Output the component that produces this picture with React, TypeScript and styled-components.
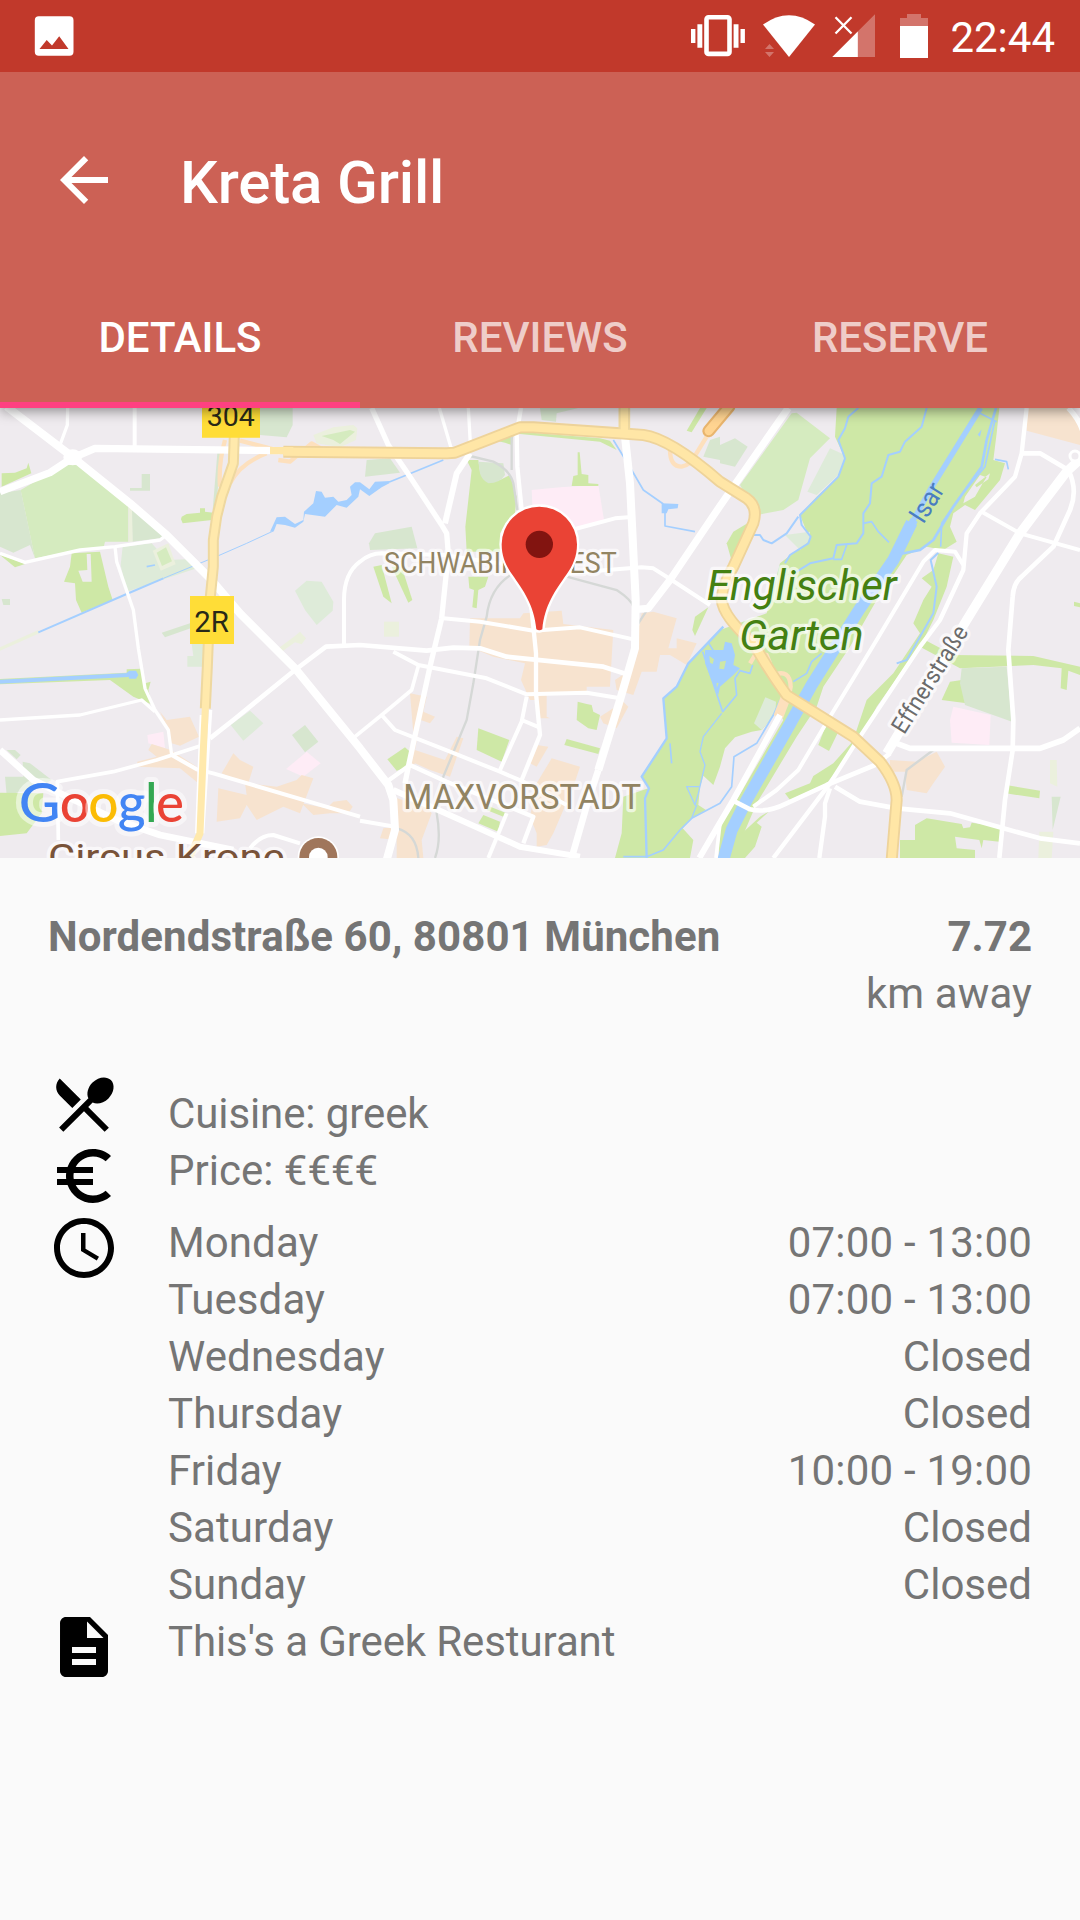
import React from "react";
import styled, { createGlobalStyle } from "styled-components";

const GlobalStyle = createGlobalStyle`
  * { box-sizing: border-box; }
  html, body { margin: 0; padding: 0; background: #fafafa; }
  body { font-family: Roboto, "Noto Sans", sans-serif; }
`;

const Screen = styled.div`
  width: 1080px;
  height: 1920px;
  display: flex;
  flex-direction: column;
  overflow: hidden;
  background: #fafafa;
`;

const StatusBar = styled.header`
  position: relative;
  z-index: 2;
  height: 72px;
  flex: none;
  display: flex;
  align-items: center;
  justify-content: space-between;
  padding: 0 25px 0 34px;
  background: #c1392b;
  color: #fff;
`;

const StatusGroup = styled.div`
  display: flex;
  align-items: center;
  height: 72px;
`;

const Clock = styled.time`
  margin-left: 20px;
  font-size: 42px;
  line-height: 72px;
  padding-top: 3px;
`;

const AppBar = styled.div`
  position: relative;
  z-index: 1;
  flex: none;
  height: 336px;
  padding-top: 24px;
  display: flex;
  flex-direction: column;
  background: #cc6155;
  box-shadow: 0 3px 12px rgba(0, 0, 0, 0.42);
  color: #fff;
`;

const Toolbar = styled.div`
  height: 168px;
  display: flex;
  align-items: center;
  gap: 60px;
  padding: 0 48px;
`;

const BackButton = styled.button`
  width: 72px;
  height: 72px;
  padding: 0;
  border: 0;
  background: none;
  color: inherit;
`;

const Title = styled.h1`
  margin: 0;
  padding-top: 5px;
  font-size: 60px;
  line-height: 72px;
  font-weight: 500;
  letter-spacing: -0.15px;
`;

const Tabs = styled.nav`
  display: grid;
  grid-template-columns: repeat(3, 1fr);
  height: 144px;
`;

const Tab = styled.button<{ $active?: boolean }>`
  padding: 8px 0 0;
  border: 0;
  border-bottom: 6px solid ${(p) => (p.$active ? "#ff4081" : "transparent")};
  background: none;
  font: 500 42px Roboto, sans-serif;
  color: ${(p) => (p.$active ? "#fff" : "rgba(255, 255, 255, 0.7)")};
`;

const MapView = styled.section`
  flex: none;
  height: 450px;
  overflow: hidden;
  background: #efebef;

  svg { display: block; }
`;

const Details = styled.main`
  padding: 48px 48px 0;
  display: flex;
  flex-direction: column;
  font-size: 42px;
  line-height: 57px;
  color: #757575;
`;

const AddressRow = styled.div`
  display: flex;
  justify-content: space-between;
  margin-bottom: 48px;
`;

const Distance = styled.div`
  display: flex;
  flex-direction: column;
  align-items: flex-end;
`;

const Line = styled.span<{ $bold?: boolean; $tracking?: number }>`
  height: 57px;
  padding-top: 2px;
  white-space: nowrap;
  font-weight: ${(p) => (p.$bold ? 700 : 400)};
  letter-spacing: ${(p) => p.$tracking ?? 0}px;
`;

const InfoRow = styled.div<{ $align?: string }>`
  display: grid;
  grid-template-columns: 72px 1fr;
  column-gap: 48px;
  align-items: ${(p) => p.$align ?? "start"};
`;

const HoursList = styled.div`
  display: flex;
  flex-direction: column;
`;

const HoursRow = styled.div`
  display: flex;
  justify-content: space-between;
`;

const Icon = styled.svg.attrs({ viewBox: "0 0 24 24" })`
  display: block;
  width: 72px;
  height: 72px;
  fill: currentColor;
`;

const RowIcon = styled(Icon)`
  color: #000;
`;

const icons = {
  back: "M20 11H7.83l5.59-5.59L12 4l-8 8 8 8 1.41-1.41L7.83 13H20v-2z",
  dining:
    "M8.1 13.34l2.83-2.83L3.91 3.5c-1.56 1.56-1.56 4.09 0 5.66l4.19 4.18zm6.78-1.81c1.53.71 3.68.21 5.27-1.38 1.91-1.91 2.28-4.65.81-6.12-1.46-1.46-4.2-1.1-6.12.81-1.59 1.59-2.09 3.74-1.38 5.27L3.7 19.87l1.41 1.41L12 14.41l6.88 6.88 1.41-1.41L13.41 13l1.47-1.47z",
  euro:
    "M15 18.5c-2.51 0-4.68-1.42-5.76-3.5H15v-2H8.58c-.05-.33-.08-.66-.08-1s.03-.67.08-1H15V9H9.24C10.32 6.92 12.5 5.5 15 5.5c1.61 0 3.09.59 4.23 1.57L21 5.3C19.41 3.87 17.3 3 15 3c-3.92 0-7.24 2.51-8.48 6H3v2h3.06c-.04.33-.06.66-.06 1s.02.67.06 1H3v2h3.52c1.24 3.49 4.56 6 8.48 6 2.31 0 4.41-.87 6-2.3l-1.78-1.77c-1.13.98-2.6 1.57-4.22 1.57z",
  clock:
    "M11.99 2C6.47 2 2 6.48 2 12s4.47 10 9.99 10C17.52 22 22 17.52 22 12S17.52 2 11.99 2zM12 20c-4.42 0-8-3.58-8-8s3.58-8 8-8 8 3.58 8 8-3.58 8-8 8zm.5-13H11v6l5.25 3.15.75-1.23-4.5-2.67z",
  description:
    "M14 2H6c-1.1 0-1.99.9-1.99 2L4 20c0 1.1.89 2 1.99 2H18c1.1 0 2-.9 2-2V8l-6-6zm2 16H8v-2h8v2zm0-4H8v-2h8v2zm-3-5V3.5L18.5 9H13z",
};

const hours: [string, string][] = [
  ["Monday", "07:00 - 13:00"],
  ["Tuesday", "07:00 - 13:00"],
  ["Wednesday", "Closed"],
  ["Thursday", "Closed"],
  ["Friday", "10:00 - 19:00"],
  ["Saturday", "Closed"],
  ["Sunday", "Closed"],
];

/* ---- Map data: three map units per screen pixel ---- */

const GREEN = "#cee8a6";
const MEADOW = "#d5ebbf";
const SAGE = "#d7e6cf";
const PALE = "#deebd9";
const CREAM = "#ebf0dd";
const PEACH = "#f7e3cf";
const PINK = "#feecf6";
const LAND = "#efebef";
const WATER = "#a4cfff";

const areas: [string, string][] = [
  [SAGE, "M0 280L62 270L105 475L90 435L40 458L0 440Z"],
  [MEADOW, "M190 195H245L385 315V425H315L310 445L235 450L105 475L62 270Z"],
  [SAGE, "M395 322L490 405L480 415L397 425Z"],
  [CREAM, "M386 316L396 322L398 425H386Z"],
  [GREEN, "M5 220L45 218L80 205L85 188L94 220L5 260Z"],
  [GREEN, "M0 465L40 478L75 492L45 502Z"],
  [SAGE, "M425 222H450V272H390V264H425Z"],
  [GREEN, "M545 350L560 342L600 338V325H615V335L640 338L636 360L548 370L543 358Z"],
  [SAGE, "M652 160H662L655 250L648 330L638 330Z"],
  [GREEN, "M215 460L300 455L325 560L338 600L245 638L228 600L225 550L192 545L210 500Z"],
  [LAND, "M235 512L262 510L260 462H272L275 545L248 545Z"],
  [PALE, "M368 440L455 430L500 480L565 478L590 505L500 535L380 575L362 495Z"],
  [CREAM, "M458 452L505 430L527 493L482 512Z"],
  [MEADOW, "M470 458L498 442L516 484L486 498Z"],
  [SAGE, "M5 597H30V615H10Z"],
  [SAGE, "M485 698L570 670L572 685L495 712Z"],
  [PALE, "M575 732H612V800H562V768H580Z"],
  [PALE, "M885 572L920 542L965 545L1000 605L998 632L950 675L915 630Z"],
  [CREAM, "M835 745L880 712L900 695L918 715L905 733L885 727L845 755Z"],
  [CREAM, "M0 742L115 690L118 700L0 752Z"],
  [GREEN, "M0 837L380 818L380 808L425 806L435 850L452 845L445 870L457 914L400 890L330 840L0 853Z"],
  [PALE, "M692 975L750 932L790 970L730 1022Z"],
  [SAGE, "M876 1005L915 975L955 1025L915 1057Z"],
  [PINK, "M858 1107L920 1055L962 1090L910 1130Z"],
  [PINK, "M442 1005L490 995L495 1045L445 1030Z"],
  [SAGE, "M780 24H878V75L860 112L780 105Z"],
  [CREAM, "M940 105L1000 82L1060 75L1072 85L1068 120L1020 142L950 130Z"],
  [MEADOW, "M965 108L1050 90L1065 95L1020 132L1000 120Z"],
  [PEACH, "M480 935L500 960L570 950L597 1010L540 1037L515 1030L505 990Z"],
  [PEACH, "M445 1050L455 1032L512 1050L590 1100L595 1150L540 1105L410 1100L412 1085L470 1070Z"],
  [PEACH, "M665 1120L700 1060L720 1080L760 1100L745 1150L830 1160L890 1140L905 1125L940 1135L915 1200L900 1240L850 1220L770 1260L740 1215L720 1255L650 1265L655 1165L740 1185L735 1150Z"],
  [PEACH, "M905 1210L980 1225L1000 1205L1040 1200L1058 1220L1045 1240L990 1240L940 1245Z"],
  [SAGE, "M15 1130H70L68 1085L90 1090L155 1140L110 1165L20 1185Z"],
  [SAGE, "M20 1050H45L62 1065L50 1078Z"],
  [GREEN, "M0 1178L130 1180L125 1240L80 1300L0 1308Z"],
  [SAGE, "M1100 180L1170 175L1200 218L1095 230Z"],
  [SAGE, "M1107 430L1125 400L1235 380L1252 445L1110 450Z"],
  [GREEN, "M1400 180L1435 180L1440 215L1500 240L1530 225L1550 290L1545 340L1500 400V455H1400L1396 380L1405 300L1415 210Z"],
  [SAGE, "M1435 185L1510 190L1515 225Q1500 250 1465 250Q1445 240 1440 220Z"],
  [GREEN, "M1480 120L1540 108L1535 135L1515 128Z"],
  [GREEN, "M1120 500L1145 495L1175 610L1150 590Z"],
  [GREEN, "M1175 500L1205 500L1237 600L1225 608Z"],
  [GREEN, "M1405 530H1465L1455 560L1435 570L1430 625L1417 622L1422 570L1408 565Z"],
  [CREAM, "M1152 665H1197V710H1152Z"],
  [PINK, "M1595 270L1680 262L1795 255L1812 360L1735 380L1600 380Z"],
  [GREEN, "M1733 157H1739L1745 222L1765 225V250L1795 252V258L1715 258L1720 228L1733 225Z"],
  [SAGE, "M1620 24H1735L1670 40L1668 65L1625 60Z"],
  [GREEN, "M1560 95L1800 115L1830 122L1850 150L1800 125L1560 102Z"],
  [GREEN, "M2100 24H2120L2075 97L2060 92Z"],
  [PEACH, "M1410 655L1560 655L1570 640L1685 632L1690 672L1840 690L1830 860L1760 860V885H1640V950L1650 955H1620L1610 900L1590 900L1563 840L1575 790L1480 770L1408 740Z"],
  [PEACH, "M1925 640L1960 635L2030 655L2005 745L2030 745V715L2090 730L2060 795L2010 765L1980 765L1970 815L1925 815L1900 885L1850 870L1845 840L1890 810L1905 740Z"],
  [PEACH, "M1800 950L1870 905L1885 920L1850 985L1810 970Z"],
  [GREEN, "M1733 905L1760 912L1775 915L1780 935L1800 945L1790 990L1765 985L1730 960Z"],
  [GREEN, "M1435 985L1528 1020L1505 1085L1430 1050Z"],
  [GREEN, "M1700 1017L1800 1045L1795 1062L1693 1035Z"],
  [GREEN, "M1162 1078L1215 1042L1230 1055L1225 1100L1190 1112Z"],
  [PEACH, "M1230 880L1280 890L1270 935L1305 950L1290 970L1262 960L1245 1050L1335 1080L1370 1010L1390 1015L1350 1130L1290 1110L1245 1090L1215 1125L1240 1000Z"],
  [PEACH, "M1655 1075L1740 1100L1720 1160L1690 1230L1660 1300L1640 1335L1610 1340V1300L1590 1250L1610 1150Z"],
  [PEACH, "M1610 1035L1645 1040L1610 1100L1590 1090Z"],
  [PEACH, "M1175 1190L1280 1220L1295 1240L1265 1320L1270 1374H1190V1320L1140 1315L1150 1285L1190 1280Z"],
  [GREEN, "M1450 1245L1500 1265L1495 1295L1435 1270Z"],
  [GREEN, "M1465 1218L1520 1240L1510 1250L1460 1230Z"],
  [MEADOW, "M2375 40L2390 38L2490 115L2430 175L2395 300L2350 330L2270 345L2220 255Z"],
  [GREEN, "M2510 24L2560 24H2998L2990 100L2980 180L3015 190L3000 240L2925 330L2895 315L2860 340L2850 380L2870 425L2830 450L2780 440L2720 465L2630 600L2550 740L2470 860L2450 920L2390 1010L2270 1210L2200 1374H1845L1865 1300L1870 1190L1945 1165L1925 1130L2000 1015L1990 895L2030 860L2065 790L2160 690L2300 640L2340 490L2430 420L2400 345L2450 290L2515 230L2535 175L2505 110Z"],
  [PALE, "M2490 145L2535 165L2520 220L2450 285L2422 275Z"],
  [PALE, "M2355 405L2430 395L2430 420L2400 450Z"],
  [GREEN, "M2200 395L2250 365L2245 410L2200 500L2180 430Z"],
  [GREEN, "M2085 650L2125 622L2085 708L2077 690Z"],
  [LAND, "M2948 250L2960 232L2940 225L2895 290L2890 310L2925 290ZM2970 220L2965 238L2930 262L2925 255Z"],
  [LAND, "M2335 930L2285 990L2255 995L2205 1012L2175 1045L2160 1100L2140 1155L2110 1127L2100 1160L2095 1215L2118 1230L2075 1255L2048 1285L2080 1320L2070 1374H2156L2160 1270L2210 1200L2350 960Z"],
  [PALE, "M2296 892L2328 905L2326 940L2285 990L2262 970Z"],
  [GREEN, "M2860 470L2840 560L2800 660L2770 720L2680 850L2630 920L2590 1000L2560 1020L2600 900L2680 820L2760 700L2740 670L2770 600L2795 560L2765 535L2800 510L2815 460Z"],
  [GREEN, "M2480 970L2520 985L2487 1053L2455 1035Z"],
  [GREEN, "M2580 1000L2545 1070L2480 1150L2370 1200L2355 1180L2430 1150L2440 1128L2500 1090Z"],
  [GREEN, "M2220 1240L2226 1300L2280 1250L2310 1232L2270 1268L2285 1280L2265 1340L2235 1374H2180L2205 1290Z"],
  [SAGE, "M2160 135L2205 115L2243 140L2205 200L2160 190Z"],
  [SAGE, "M2130 120L2160 110V180L2110 170Z"],
  [PEACH, "M3078 24H3210L3240 90V135L3080 92Z"],
  [GREEN, "M2765 715L2860 765L3100 768L3240 800V825L3205 812L3200 870L3182 865L3185 805L3100 795L2880 805L2760 740Z"],
  [GREEN, "M2850 845L2885 840L2900 910L2825 900Z"],
  [SAGE, "M2885 805L3020 800L3036 965L2895 915L2880 850Z"],
  [PINK, "M2860 920L2972 945L2968 1035L2855 1028L2850 960Z"],
  [PEACH, "M2670 1080L2750 1085L2810 1055L2835 1100L2800 1150L2780 1180L2720 1170L2715 1115L2670 1115Z"],
  [GREEN, "M3018 1155L3120 1172L3118 1195L3018 1180Z"],
  [GREEN, "M2745 1275L2780 1255L2885 1272L2890 1285L2910 1282L2915 1268L3005 1280L2998 1325L2950 1320L2945 1345L2938 1320L2865 1310L2870 1345L2925 1350V1374H2700V1320H2745Z"],
  [SAGE, "M3155 1190H3182L3158 1290Z"],
  [CREAM, "M3150 1080H3170L3172 1160L3150 1150Z"],
  [CREAM, "M3118 1295H3160L3155 1374H3115Z"],
  [GREEN, "M3222 605L3240 610V622L3222 618Z"],
  [WATER, "M810 395L830 352L855 350L885 372L910 360L912 335L940 310L948 273L965 275L975 293L1000 290L1015 305L1040 300L1055 285L1050 260L1065 247H1080L1108 268L1125 245L1170 243L1168 250L1145 262L1108 288L1080 268L1075 290L1040 323L1010 315L975 350L915 342L910 365L885 383L855 375L830 372L822 392Z"],
  [WATER, "M380 818L388 812H408L415 825L408 836H388Z"],
  [WATER, "M2115 750H2170L2175 725L2195 730L2205 765L2200 795L2220 805L2200 825L2160 860L2155 885L2142 860L2115 790Z"],
  [GREEN, "M2128 768L2142 778L2138 792L2130 788ZM2160 785L2178 782L2172 808L2158 806ZM2150 848L2156 850L2150 864Z"],
  [WATER, "M1985 310L2035 312L2033 325L2005 328L2000 340H1985Z"],
  [WATER, "M2945 88L2940 110L2933 104Z"],
];

const streams: [number, string][] = [
  [6, "M115 697L380 582L490 535"],
  [3, "M490 535L660 465L740 430L822 392"],
  [5, "M440 500L465 495"],
  [12, "M0 845L385 825"],
  [5, "M1168 246L1220 225L1330 180"],
  [5, "M1840 120L1895 210L1930 270L1990 312M1995 325V378L2085 395"],
  [16, "M2942 24L2790 270L2735 370"],
  [36, "M2735 368L2680 480L2580 625L2435 855L2360 990L2240 1200L2195 1290L2170 1380"],
  [24, "M2742 360L2700 450L2650 520"],
  [8, "M2988 24L2960 120L2945 200L2860 320L2800 420L2760 450L2700 462"],
  [5, "M2940 40L2990 65M2985 60L2955 200L2880 290L2825 370L2822 440"],
  [6, "M2815 458L2792 480L2810 560L2800 640L2760 710L2720 780L2690 790"],
  [6, "M2575 24L2545 50L2535 85L2515 120L2535 175L2515 230L2450 295L2400 345L2405 375L2432 410L2425 430L2370 465L2355 490"],
  [6, "M2395 350L2360 400L2315 430L2290 420L2280 405H2255"],
  [6, "M2780 24L2765 80L2715 125L2700 155L2665 165L2645 230L2615 250L2610 310L2590 340V400L2570 430L2510 435L2500 475L2430 490L2390 515"],
  [5, "M2540 435L2525 478H2500M2590 370L2615 365L2635 395L2667 427"],
  [5, "M2380 845L2420 820L2435 785L2465 760"],
  [7, "M2170 680L2065 790L2030 860L1990 895L2000 1015L1925 1130L1947 1165L1935 1195L1940 1374"],
  [5, "M2340 900L2320 945L2270 1030L2202 1070L2195 1160L2160 1210L2075 1255L2040 1290L1990 1350L1940 1370H1870"],
  [4, "M2165 940L2110 1010L2100 1055L2115 1095L2095 1180L2085 1215L2060 1160H2098M2090 1215L2075 1255"],
  [5, "M2108 755L2168 935L2210 885L2205 835L2220 812L2250 820L2258 795M2125 728L2142 755"],
  [5, "M2010 1030L2015 1090M2985 178L3020 185L3025 208"],
];

const rails =
  "M1410 168L1480 185Q1530 210 1540 250L1552 330M1535 105V210M1540 520Q1470 560 1460 650L1440 720L1420 850L1400 960L1330 1130L1310 1240Q1325 1320 1305 1374M1700 530L1850 570Q1895 600 1900 620M1190 1285Q1250 1300 1255 1374M1915 670L1938 635M2800 1050L2720 1110L2705 1190";

const roads: [number, string][] = [
  [24, "M20 20L210 165L390 310L500 405L630 535L720 640L885 805L1080 1045L1165 1155L1180 1200L1185 1290L1160 1380"],
  [22, "M0 275L150 218L215 175L285 145L840 152"],
  [10, "M203 24L202 75L180 135"],
  [12, "M404 24V140"],
  [10, "M0 460L75 487L240 450L345 440L480 420L500 405"],
  [10, "M345 440L350 485L400 630L415 745L435 865L465 930L505 990L515 1065"],
  [10, "M0 960L240 945L425 900L465 935"],
  [20, "M0 1050L100 1140L180 1180L350 1260L480 1305L700 1350"],
  [12, "M750 1345Q780 1305 820 1305L900 1330"],
  [11, "M175 1320L172 1145L340 1115L470 1080L600 1038"],
  [12, "M515 1065L590 1108L640 1120L1080 1250"],
  [14, "M630 1015L700 960L885 810L978 740L1080 735L1280 752L1360 743L1440 745L1520 770L1810 800L1878 822"],
  [12, "M1032 735V600Q1032 520 1080 485Q1110 460 1145 460L1330 465L1700 520L1925 502L1960 505L2015 540L2130 615"],
  [11, "M1065 1010L1145 945L1235 870L1255 798"],
  [16, "M1115 24L1165 135L1220 215L1325 375L1340 400L1345 460L1325 655L1290 800L1225 1100L1215 1150"],
  [10, "M1318 24L1355 150M1405 24L1411 130"],
  [18, "M1410 160L1370 220L1335 370"],
  [13, "M1563 24L1550 100L1552 200L1565 330L1596 640L1608 760L1608 880L1620 1005L1565 1140"],
  [24, "M1875 110L1890 250L1907 600L1905 745L1860 900L1795 1110"],
  [20, "M1795 1110L1762 1210L1715 1374"],
  [12, "M1725 387L1845 355L1885 352"],
  [22, "M1910 628L1945 625L2010 540L2160 318L2365 24"],
  [12, "M1330 655L1440 665L1600 692L1740 682L1900 718"],
  [12, "M1180 755L1255 795L1460 835L1580 883L1760 878L1860 895"],
  [12, "M1145 945L1185 990L1350 1055L1500 1115L1570 1145L1700 1215"],
  [12, "M1580 890L1565 965L1500 1110M1565 960L1618 982"],
  [13, "M1160 1145L1230 1095L1340 1145L1600 1250L1570 1330"],
  [12, "M1080 1262L1185 1280"],
  [18, "M1180 1170L1370 1255L1560 1340L1740 1370"],
  [12, "M1465 1374L1520 1240"],
  [13, "M3080 24L3065 160L3045 230L2940 340L2900 400L2890 510L2820 660L2760 740L2680 860L2560 1040L2490 1150L2320 1374"],
  [12, "M2890 495L2865 455L2805 450L2770 485L2630 720L2490 950L2395 1110L2330 1170L2260 1220"],
  [28, "M3260 160L3200 215L3120 320L3060 400L2900 660L2660 1060"],
  [14, "M2670 1060L2625 1095L2480 1155L2360 1210Q2300 1240 2250 1228L2205 1205"],
  [14, "M3065 160L3120 160L3205 210Q3235 270 3210 330L3160 440L3065 530Q3040 550 3038 590L3025 750L3040 960L3038 1050L3015 1200L2998 1374"],
  [12, "M2945 335L3060 400L3240 450"],
  [16, "M3205 24Q3240 60 3250 100"],
  [17, "M2690 1030L2730 1045L3040 1045H3120L3190 1020L3240 985"],
  [14, "M2505 1160L2580 1205L2690 1225L2850 1240L3010 1285L3120 1315L3240 1330"],
  [13, "M2490 1165L2475 1210V1250L2458 1374"],
  [18, "M2340 945L2200 1200L2150 1285L2098 1374"],
  [11, "M2160 1270L2148 1374"],
];

const southRoad =
  "M703 105L700 190L665 290L650 350L640 420L640 500L630 600L622 800L610 1050L600 1300L568 1374";
const ringRoad =
  "M850 155L1340 160L1365 158L1560 82L1600 82L1860 100L1930 105Q2010 115 2160 245L2240 295Q2275 320 2260 370L2200 500Q2165 560 2165 600Q2170 650 2260 730L2290 780Q2320 830 2360 885L2560 1010L2640 1085Q2690 1150 2690 1200L2675 1380";

interface LabelProps {
  x: number;
  y: number;
  size: number;
  width: number;
  color: string;
  italic?: boolean;
  rotate?: number;
  halo?: boolean;
  children: string;
}

const MapText = styled.text`
  font-family: Roboto, sans-serif;
  paint-order: stroke;
  stroke-linejoin: round;
`;

const Label = ({ x, y, size, width, color, italic, rotate, halo = true, children }: LabelProps) => (
  <MapText
    x={x}
    y={y}
    fontSize={size}
    fontStyle={italic ? "italic" : "normal"}
    fill={color}
    stroke={halo ? "rgba(255,255,255,0.65)" : "none"}
    strokeWidth={halo ? 20 : 0}
    textLength={width}
    lengthAdjust="spacingAndGlyphs"
    transform={rotate ? `rotate(${rotate} ${x} ${y})` : undefined}
  >
    {children}
  </MapText>
);

const LogoText = styled.text`
  font: 500 160px Lato, sans-serif;
  paint-order: stroke;
  stroke: rgba(255, 255, 255, 0.5);
  stroke-width: 30px;
  stroke-linejoin: round;
`;

const logo: [string, number, number, string][] = [
  ["G", 56, 126, "#4285f4"],
  ["o", 179, 91, "#ea4335"],
  ["o", 265, 91, "#fbbc05"],
  ["g", 353, 84, "#4285f4"],
  ["l", 435, 38, "#34a853"],
  ["e", 468, 84, "#ea4335"],
];

const CityMap = () => (
  <svg width="1080" height="450" viewBox="0 24 3240 1350">
    {areas.map(([fill, d], i) => (
      <path key={i} d={d} fill={fill} />
    ))}
    <g fill="none" stroke={WATER} strokeLinejoin="round">
      {streams.map(([w, d], i) => (
        <path key={i} d={d} strokeWidth={w} />
      ))}
    </g>
    <path d={rails} fill="none" stroke="#d5d8d6" strokeWidth="7" />
    <g fill="none" stroke="#fde0bd" strokeWidth="13" strokeLinejoin="round">
      <path d="M660 260Q655 190 675 120M690 250Q720 190 800 160M720 122L830 150M835 180L870 185L935 130L970 150" />
      <path d="M2010 150Q2010 200 2045 200Q2070 195 2080 175L2120 110M2250 790L2265 765L2300 765L2310 790M2320 825Q2370 805 2372 860L2365 900" />
      <path d="M2358 890L2335 950" strokeWidth="30" />
    </g>
    <g fill="none" stroke="#fff" strokeLinejoin="round">
      {roads.map(([w, d], i) => (
        <path key={i} d={d} strokeWidth={w} />
      ))}
      <ellipse cx="218" cy="172" rx="20" ry="16" strokeWidth="16" fill="#fff" />
      <circle cx="3225" cy="168" r="15" strokeWidth="9" fill={LAND} />
      <path d="M650 460L645 560M632 930L608 1300M604 945L590 1300" strokeWidth="10" />
    </g>
    <g fill="none" strokeLinejoin="round">
      <path d={southRoad} stroke="#eed8a0" strokeWidth="33" strokeDasharray="830 600" />
      <path d={southRoad} stroke="#ffe9ac" strokeWidth="21" />
      <path d="M2187 20L2126 93" stroke="#e9b56e" strokeWidth="38" strokeLinecap="round" />
      <path d="M2187 20L2126 93" stroke="#ffd491" strokeWidth="25" strokeLinecap="round" />
      <path d={ringRoad} stroke="#eed39a" strokeWidth="36" />
      <path d="M1873 20V100" stroke="#eed8a0" strokeWidth="35" />
      <path d={ringRoad} stroke="#ffe6a6" strokeWidth="25" />
      <path d="M1873 20V100M810 152H880" stroke="#ffe6a6" strokeWidth="22" />
    </g>

    <path d="M606 24H780V113H606ZM570 588H702V732H570Z" fill="#ffdd37" />
    <Label x={620} y={78} size={84} width={144} color="#292918" halo={false}>304</Label>
    <Label x={583} y={696} size={87} width={104} color="#292918" halo={false}>2R</Label>

    <Label x={1152} y={518} size={87} width={698} color="#928462">SCHWABING-WEST</Label>
    <Label x={1210} y={1228} size={103} width={713} color="#928462">MAXVORSTADT</Label>
    <Label x={2120} y={600} size={129} width={570} color="#448012" italic>Englischer</Label>
    <Label x={2218} y={750} size={129} width={373} color="#448012" italic>Garten</Label>
    <Label x={2770} y={374} size={80} width={124} color="#4a7dc0" rotate={-58} halo={false}>Isar</Label>
    <Label x={2713} y={1006} size={72} width={366} color="#6c6c6c" rotate={-58}>Effnerstraße</Label>
    <Label x={144} y={1411} size={112} width={710} color="#795339">Circus Krone</Label>

    <circle cx="955" cy="1371" r="62" fill="#fff" />
    <circle cx="955" cy="1371" r="57" fill="#a0765b" />
    <circle cx="955" cy="1371" r="28" fill="#fff" />

    {logo.map(([ch, x, w, color], i) => (
      <LogoText key={i} x={x} y={1267} textLength={w} lengthAdjust="spacingAndGlyphs" fill={color}>
        {ch}
      </LogoText>
    ))}

    <path
      d="M1505 433A113 113 0 0 1 1731 433C1731 470 1718 497 1700 523C1665 573 1634 615 1627 688Q1618 694 1609 688C1602 615 1571 573 1536 523C1518 497 1505 470 1505 433Z"
      fill="#ea4335"
      stroke="#fff"
      strokeWidth="14"
      paintOrder="stroke"
    />
    <circle cx="1618" cy="433" r="41" fill="#821410" />
  </svg>
);

const PhotoIcon = () => (
  <svg width="40" height="40" viewBox="0 0 40 40">
    <path
      fill="#fff"
      fillRule="evenodd"
      d="M4.8.3H35.5Q39.5.3 39.5 4.3V35.7Q39.5 39.7 35.5 39.7H4.8Q.8 39.7.8 35.7V4.3Q.8.3 4.8.3ZM5.5 33H34.5L25.2 20.3 18 29.5 12.7 24Z"
    />
  </svg>
);

const StatusIcons = () => (
  <svg width="240" height="72" viewBox="690 0 240 72" fill="#fff">
    <rect x="706.5" y="17.3" width="23" height="36.6" rx="2" fill="none" stroke="#fff" strokeWidth="4.6" />
    <path d="M697.4 24.3h4.9v23.4h-4.9zM691 29h4.4v14H691zM733.6 24.3h4.9v23.4h-4.9zM740.5 29h4.4v14h-4.4z" />
    <path d="M763 24.6Q789 6 815 24.6L789 57Z" />
    <path d="M765 49L769.5 44L774 49ZM765 52H774L769.5 57Z" opacity=".3" />
    <path d="M875 14.3V57H832.3Z" opacity=".3" />
    <path d="M857.8 31.5V57H832.3Z" />
    <path d="M835.5 17.3L851.5 33.5M851.5 17.3L835.5 33.5" stroke="#fff" strokeWidth="2.3" />
    <path d="M907 14h14v4h7v8h-28v-8h7z" opacity=".3" />
    <path d="M900 26h28v32h-28z" />
  </svg>
);

export default function App() {
  return (
    <Screen>
      <GlobalStyle />
      <StatusBar>
        <PhotoIcon />
        <StatusGroup>
          <StatusIcons />
          <Clock>22:44</Clock>
        </StatusGroup>
      </StatusBar>

      <AppBar>
        <Toolbar>
          <BackButton aria-label="Back">
            <Icon><path d={icons.back} /></Icon>
          </BackButton>
          <Title>Kreta Grill</Title>
        </Toolbar>
        <Tabs>
          <Tab $active>DETAILS</Tab>
          <Tab>REVIEWS</Tab>
          <Tab>RESERVE</Tab>
        </Tabs>
      </AppBar>

      <MapView>
        <CityMap />
      </MapView>

      <Details>
        <AddressRow>
          <Line $bold $tracking={0.08}>Nordendstraße 60, 80801 München</Line>
          <Distance>
            <Line $bold>7.72</Line>
            <Line $tracking={0.1}>km away</Line>
          </Distance>
        </AddressRow>

        <InfoRow $align="end">
          <RowIcon><path d={icons.dining} /></RowIcon>
          <Line $tracking={-0.1}>Cuisine: greek</Line>
        </InfoRow>
        <InfoRow>
          <RowIcon><path d={icons.euro} /></RowIcon>
          <Line>Price: €€€€</Line>
        </InfoRow>
        <InfoRow>
          <RowIcon><path d={icons.clock} /></RowIcon>
          <HoursList>
            {hours.map(([day, time]) => (
              <HoursRow key={day}>
                <Line $tracking={0.1}>{day}</Line>
                <Line $tracking={time === "Closed" ? 0 : 0.2}>{time}</Line>
              </HoursRow>
            ))}
          </HoursList>
        </InfoRow>
        <InfoRow>
          <RowIcon><path d={icons.description} /></RowIcon>
          <Line $tracking={-0.1}>This's a Greek Resturant</Line>
        </InfoRow>
      </Details>
    </Screen>
  );
}
